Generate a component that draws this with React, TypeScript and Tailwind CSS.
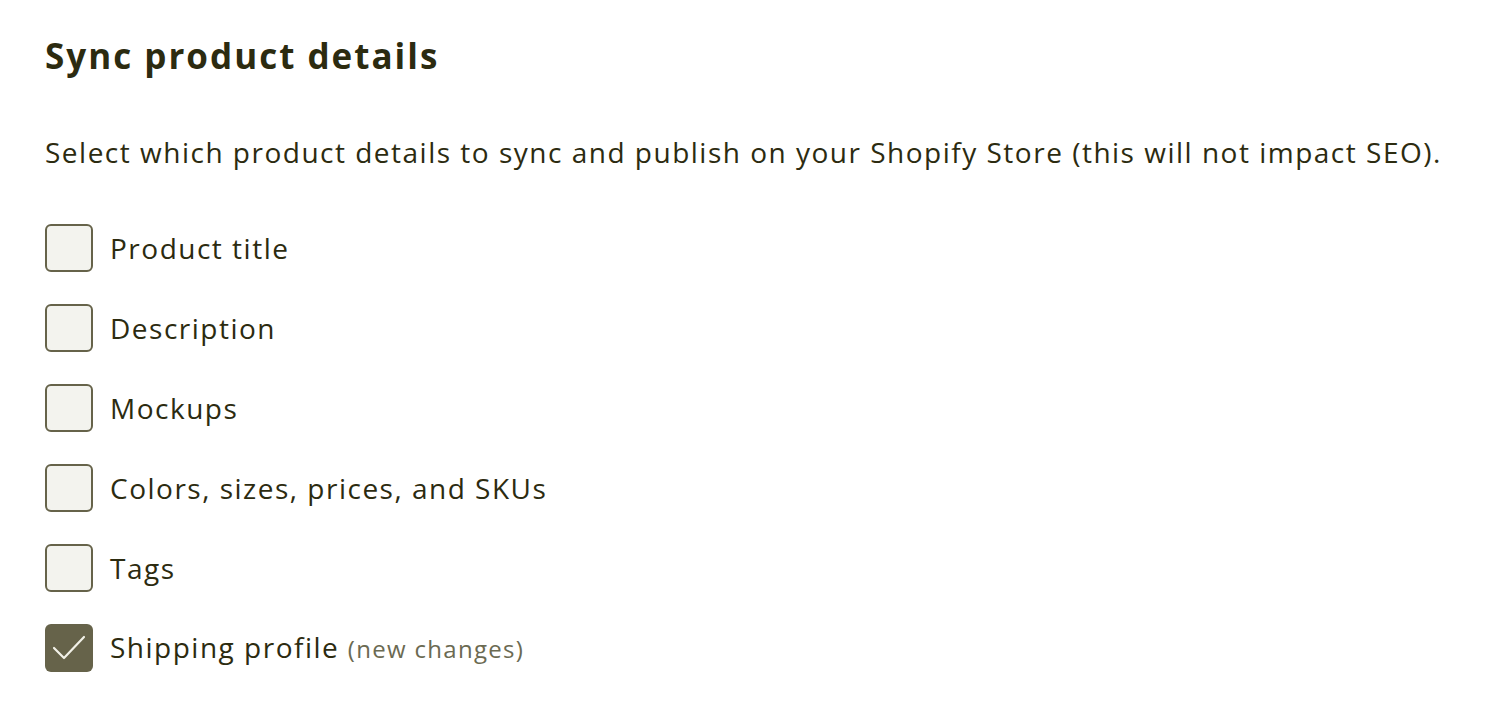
const options = [
  { label: 'Product title', checked: false },
  { label: 'Description', checked: false },
  { label: 'Mockups', checked: false },
  { label: 'Colors, sizes, prices, and SKUs', checked: false },
  { label: 'Tags', checked: false },
  { label: 'Shipping profile', checked: true, note: '(new changes)' },
];

export default function App() {
  return (
    <div className="min-h-screen bg-white px-[45px] pt-[33px] text-[#2c2b10] font-['Open_Sans',sans-serif]">
      <h1 className="text-[35px] font-bold leading-[46px] tracking-[2px]">Sync product details</h1>

      <p className="mt-[53px] text-[28px] leading-[40px] tracking-[1.5px]">
        Select which product details to sync and publish on your Shopify Store (this will not impact SEO).
      </p>

      <div className="mt-[52px] flex flex-col gap-[32px]">
        {options.map(opt => (
          <label key={opt.label} className="flex items-center gap-[17px]">
            {opt.checked ? (
              <span className="h-[48px] w-[48px] rounded-[6px] bg-[#66634a]">
                <svg viewBox="0 0 48 48" className="h-full w-full" fill="none">
                  <path
                    d="M9 24 L19 34 L39 13"
                    stroke="#f1f0e7"
                    strokeWidth="2.2"
                    strokeLinecap="round"
                    strokeLinejoin="round"
                  />
                </svg>
              </span>
            ) : (
              <span className="h-[48px] w-[48px] rounded-[6px] border-2 border-[#66634a] bg-[#f3f3ee]" />
            )}
            <span className="text-[28px] leading-[40px] tracking-[1.5px]">
              {opt.label}
              {opt.note && (
                <span className="ml-[1px] text-[24px] tracking-[1.3px] text-[#6b6a52]"> {opt.note}</span>
              )}
            </span>
          </label>
        ))}
      </div>
    </div>
  );
}
